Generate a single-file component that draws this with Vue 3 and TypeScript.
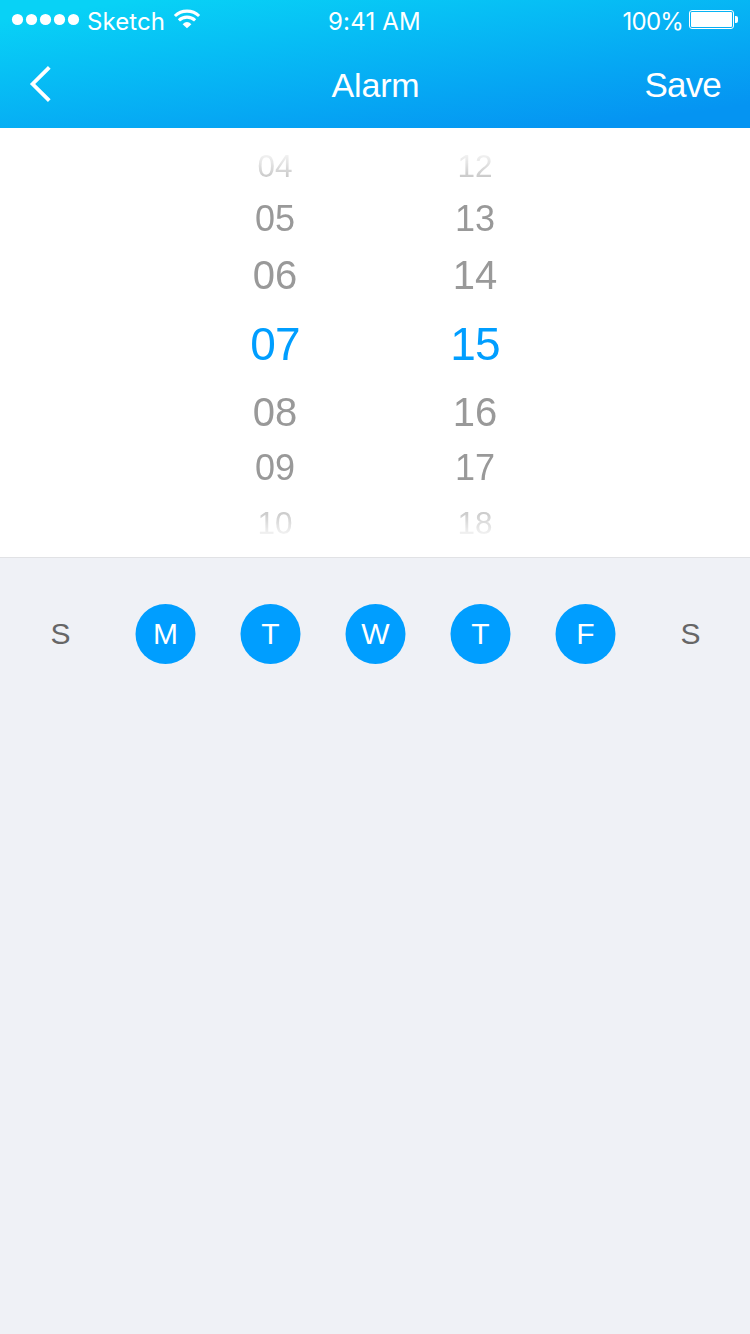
<script setup lang="ts">
interface Day {
  label: string
  active: boolean
}

const signalDots = [18, 32, 46, 60, 74]
const columns: string[][] = [
  ['04', '05', '06', '07', '08', '09', '10'],
  ['12', '13', '14', '15', '16', '17', '18'],
]
const days: Day[] = [
  { label: 'S', active: false },
  { label: 'M', active: true },
  { label: 'T', active: true },
  { label: 'W', active: true },
  { label: 'T', active: true },
  { label: 'F', active: true },
  { label: 'S', active: false },
]
</script>

<template>
  <div class="screen">
    <header class="header">
      <div class="status">
        <div class="carrier">
          <svg class="dots" width="87" height="40" viewBox="0 0 87 40">
            <circle v-for="x in signalDots" :key="x" :cx="x - 0.5" cy="19.5" r="5.6" fill="#fff" />
          </svg>
          <span class="carrier-name">Sketch</span>
          <svg class="wifi" width="28" height="20" viewBox="0 0 28 20" fill="none" stroke="#fff">
            <path d="M1.9 7C8.6 .5 19.4 .5 26.1 7" stroke-width="3.1" />
            <path d="M5.9 11.4C10.4 7.1 17.6 7.1 22.1 11.4" stroke-width="3.1" />
            <path d="M9.6 15.2Q14 10.6 18.4 15.2L14 19.2Z" fill="#fff" stroke="none" />
          </svg>
        </div>
        <span class="clock">9:41 AM</span>
        <div class="power">
          <span class="percent">100%</span>
          <svg class="battery" width="50" height="20" viewBox="0 0 50 20">
            <rect x=".5" y=".5" width="44" height="18" rx="2.5" fill="none" stroke="#fff" />
            <rect x="2" y="2" width="41" height="15" rx="1" fill="#fff" />
            <path d="M46 6h1q2 0 2 2v3q0 2-2 2h-1z" fill="#fff" />
          </svg>
        </div>
      </div>
      <nav class="nav">
        <svg class="back" width="24" height="40" viewBox="0 0 24 40">
          <path d="M20.3 3.4L3.6 20L20.3 36.6" fill="none" stroke="#fff" stroke-width="3.8" />
        </svg>
        <h1 class="title">Alarm</h1>
        <span class="save">Save</span>
      </nav>
    </header>

    <section class="picker">
      <div v-for="(column, c) in columns" :key="c" class="column">
        <span v-for="(value, i) in column" :key="value" class="value" :class="'row-' + i">{{ value }}</span>
      </div>
    </section>

    <section class="days">
      <div v-for="(day, i) in days" :key="i" class="day" :class="{ active: day.active }">
        <svg v-if="day.active" class="disc" width="61" height="60" viewBox="0 0 61 60">
          <circle cx="30.5" cy="30" r="30" fill="#009eff" />
        </svg>
        <span class="label">{{ day.label }}</span>
      </div>
    </section>
  </div>
</template>

<style>
body {
  margin: 0;
  background: #eff1f6;
}
</style>

<style scoped>
.screen {
  width: 750px;
  height: 1334px;
  overflow: hidden;
  background: #eff1f6;
  font-family: "Liberation Sans", Arial, sans-serif;
}
.header {
  height: 128px;
  background: linear-gradient(172deg, #08d2f6 8%, #0594f2 90%);
  color: #fff;
}
.status {
  display: grid;
  grid-template-columns: 1fr auto 1fr;
  height: 40px;
  font-family: Inter, sans-serif;
  font-size: 24px;
  line-height: 44px;
}
.carrier,
.power {
  display: flex;
}
.carrier-name {
  width: 86px;
  letter-spacing: 0.1px;
}
.wifi {
  margin-top: 9px;
}
.clock {
  margin-right: 1px;
  letter-spacing: 0.2px;
}
.power {
  justify-content: flex-end;
  padding-right: 11px;
}
.percent {
  letter-spacing: -0.8px;
}
.battery {
  margin: 10px 0 0 6px;
}
.nav {
  display: grid;
  grid-template-columns: 1fr auto 1fr;
  align-items: center;
  height: 88px;
  padding: 0 29px;
}
.title {
  margin: 1px 0 0 1px;
  font-size: 34px;
  font-weight: 400;
  line-height: 40px;
  letter-spacing: -0.2px;
}
.save {
  justify-self: end;
  margin-top: 1px;
  font-size: 35px;
  line-height: 40px;
  letter-spacing: -0.8px;
}
.picker {
  display: flex;
  justify-content: center;
  gap: 100px;
  box-sizing: border-box;
  height: 430px;
  padding-top: 12px;
  border-bottom: 1px solid #e1e2e5;
  background: #fff;
}
.column {
  display: flex;
  flex-direction: column;
  width: 100px;
  height: 410px;
  color: #999;
  text-align: center;
  mask-image: linear-gradient(transparent 8px, rgba(0, 0, 0, 0.52) 37px, #000 62px, #000 350px, rgba(0, 0, 0, 0.52) 372px, transparent 401px);
}
.value {
  font-size: 31.5px;
  line-height: 52px;
}
.row-1 {
  font-size: 36px;
  line-height: 54px;
}
.row-2 {
  font-size: 40px;
  line-height: 58px;
}
.row-3 {
  color: #009eff;
  font-size: 46px;
  line-height: 80px;
  letter-spacing: -0.8px;
}
.row-4 {
  font-size: 40px;
  line-height: 56px;
}
.row-5 {
  font-size: 36px;
  line-height: 56px;
}
.row-6 {
  line-height: 54px;
}
.days {
  display: flex;
  gap: 44px;
  padding: 46px 0 0 30px;
}
.day {
  display: grid;
  width: 61px;
  height: 60px;
  color: #666;
  font-size: 30px;
  line-height: 60px;
  text-align: center;
}
.disc,
.label {
  grid-area: 1 / 1;
}
.active {
  color: #fff;
}
</style>
